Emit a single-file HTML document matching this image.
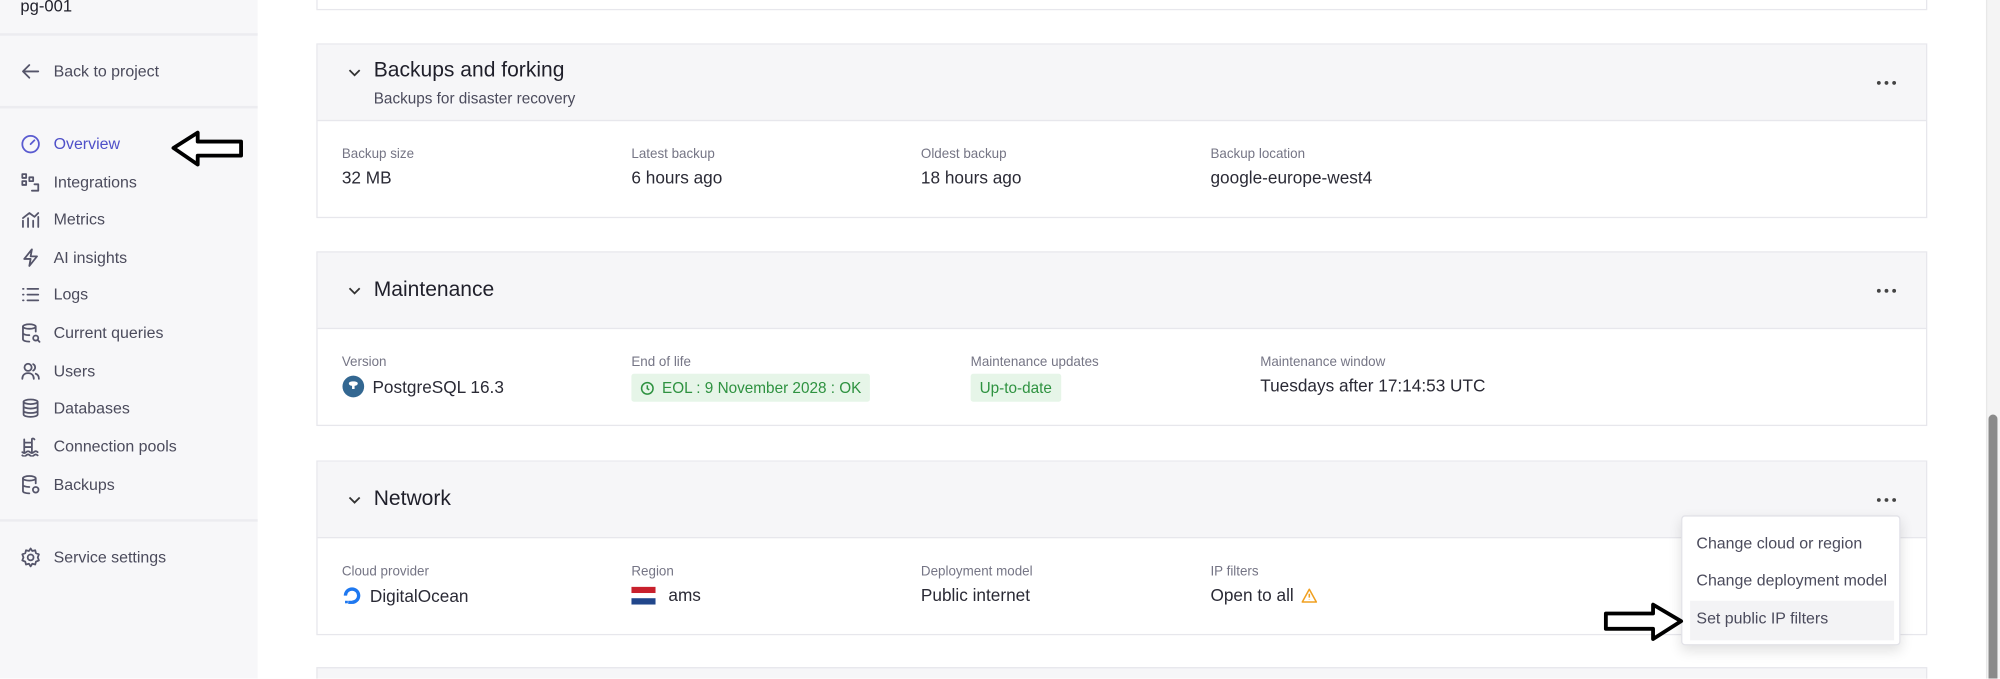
<!DOCTYPE html>
<html><head><meta charset="utf-8"><style>
*{box-sizing:border-box;margin:0;padding:0}
html,body{width:2000px;height:679px;overflow:hidden;background:#fff}
#w{position:absolute;left:0;top:0;width:1568px;height:532px;overflow:hidden;transform:scale(1.27551);transform-origin:0 0;font-family:"Liberation Sans",sans-serif;color:#1f1f2a}
.abs{position:absolute;white-space:nowrap}
#side{position:absolute;left:0;top:0;width:202px;height:532px;background:#f7f7f9}
.hr{position:absolute;left:0;width:202px;height:2px;background:#ececf0}
.nav{position:absolute;left:16px;font-size:12.5px;color:#4b4b5c;display:flex;align-items:center;gap:10px;height:16px}
.nav svg{width:16px;height:16px;fill:none;stroke:#55556a;stroke-width:1.4;stroke-linecap:round;stroke-linejoin:round}
.card{position:absolute;left:248px;width:1263px;border:1px solid #e7e7ec;background:#fff}
.hd{position:absolute;left:0;right:0;top:0;height:60px;background:#f6f6f8;border-bottom:1px solid #e7e7ec}
.ttl{position:absolute;left:44px;font-size:16.5px;color:#1f1f2a}
.chev{position:absolute;left:24px;width:10px;height:10px}
.dots{position:absolute;left:1222px;width:16px;height:4px}
.lb{position:absolute;font-size:10.5px;color:#757585}
.vl{position:absolute;font-size:13.5px;color:#2a2a35;display:flex;align-items:center;gap:6px}
.badge{background:#e6f5e8;color:#2e9240;font-size:12px;padding:4px 7px;border-radius:2px;display:flex;align-items:center;gap:6px}
</style></head><body><div id="w">
<div id="side">
<div class="abs" style="left:16px;top:-3px;font-size:13px;color:#1f1f2a">pg-001</div>
<div class="hr" style="top:26px"></div>
<div class="nav" style="top:48px"><svg viewBox="0 0 16 16"><path d="M14 8H2M7 3L2 8l5 5"/></svg>Back to project</div>
<div class="hr" style="top:83px"></div>
<div class="nav" style="top:105px;color:#4f50c8"><svg viewBox="0 0 16 16" style="stroke:#5a5bd0"><circle cx="8" cy="8" r="6.5"/><path d="M8 8l3-3"/></svg>Overview</div>
<div class="nav" style="top:135px"><svg viewBox="0 0 16 16"><rect x="1.5" y="1.5" width="3" height="3"/><rect x="1.5" y="7" width="3" height="3"/><rect x="7" y="4" width="3" height="3"/><path d="M9 14.5h5V9.5M14 9.5h-3"/></svg>Integrations</div>
<div class="nav" style="top:164px"><svg viewBox="0 0 16 16"><path d="M2 14V9M6 14V7M10 14V9M14 14V6M2 7l5-4 4 3 3-3"/></svg>Metrics</div>
<div class="nav" style="top:194px"><svg viewBox="0 0 16 16"><path d="M9 1.5L3 9h5l-1 5.5L13 7H8z"/></svg>AI insights</div>
<div class="nav" style="top:223px"><svg viewBox="0 0 16 16"><path d="M5.5 3.5H14M5.5 8H14M5.5 12.5H14M2 3.5h.5M2 8h.5M2 12.5h.5"/></svg>Logs</div>
<div class="nav" style="top:253px"><svg viewBox="0 0 16 16"><ellipse cx="7" cy="3" rx="5" ry="1.8"/><path d="M2 3v10c0 1 2 1.8 5 1.8M12 3v4M2 8c0 1 2 1.8 5 1.8"/><circle cx="12" cy="12" r="2"/><path d="M13.5 13.5l1.5 1.5"/></svg>Current queries</div>
<div class="nav" style="top:283px"><svg viewBox="0 0 16 16"><circle cx="6" cy="5" r="2.8"/><path d="M1.5 14c0-3 2-4.5 4.5-4.5s4.5 1.5 4.5 4.5M10 2.5a2.8 2.8 0 010 5M12 10c1.5.5 2.5 2 2.5 4"/></svg>Users</div>
<div class="nav" style="top:312px"><svg viewBox="0 0 16 16"><ellipse cx="8" cy="3" rx="5.5" ry="1.8"/><path d="M2.5 3v10c0 1 2.5 1.8 5.5 1.8s5.5-.8 5.5-1.8V3M2.5 6.5c0 1 2.5 1.8 5.5 1.8s5.5-.8 5.5-1.8M2.5 10c0 1 2.5 1.8 5.5 1.8s5.5-.8 5.5-1.8"/></svg>Databases</div>
<div class="nav" style="top:342px"><svg viewBox="0 0 16 16"><path d="M3 12V2.5M9 12V2.5M9 2.5c0-1 1.5-1 2 0M3 5h6M3 8.5h6M1.5 12.5c1 1 2 1 3 0s2-1 3 0 2 1 3 0 2-1 3 0M1.5 15c1 1 2 1 3 0s2-1 3 0 2 1 3 0 2-1 3 0"/></svg>Connection pools</div>
<div class="nav" style="top:372px"><svg viewBox="0 0 16 16"><ellipse cx="7" cy="3" rx="5" ry="1.8"/><path d="M2 3v10c0 1 2 1.8 5 1.8M12 3v4M2 8c0 1 2 1.8 5 1.8"/><circle cx="12" cy="12" r="2.2"/></svg>Backups</div>
<div class="hr" style="top:407px"></div>
<div class="nav" style="top:429px"><svg viewBox="0 0 16 16"><circle cx="8" cy="8" r="2.3"/><path d="M8 1l1.3 2 2.3-.6.6 2.3 2.3.9-.9 2.4.9 2.4-2.3.9-.6 2.3-2.3-.6L8 15l-1.3-2-2.3.6-.6-2.3-2.3-.9.9-2.4-.9-2.4 2.3-.9.6-2.3 2.3.6z"/></svg>Service settings</div>
</div>
<svg class="abs" style="left:134px;top:101px" width="58" height="30" viewBox="0 0 58 30"><path d="M2 15L21 3v7h34v11H21v7z" fill="#fff" stroke="#000" stroke-width="3" stroke-linejoin="round"/></svg>

<div class="card" style="top:-10px;height:18px"></div>

<div class="card" style="top:34px;height:137px">
<div class="hd"></div>
<svg class="chev" style="top:17px" viewBox="0 0 10 10"><path d="M1 3l4 4 4-4" fill="none" stroke="#333" stroke-width="1.4"/></svg>
<div class="ttl" style="top:11px">Backups and forking</div>
<div class="abs" style="left:44px;top:35px;font-size:12px;color:#4b4b5c">Backups for disaster recovery</div>
<svg class="dots" style="top:28px" viewBox="0 0 16 4"><circle cx="2" cy="2" r="1.5" fill="#444"/><circle cx="8" cy="2" r="1.5" fill="#444"/><circle cx="14" cy="2" r="1.5" fill="#444"/></svg>
<div class="lb" style="left:19px;top:80px">Backup size</div><div class="vl" style="left:19px;top:97px">32 MB</div>
<div class="lb" style="left:246px;top:80px">Latest backup</div><div class="vl" style="left:246px;top:97px">6 hours ago</div>
<div class="lb" style="left:473px;top:80px">Oldest backup</div><div class="vl" style="left:473px;top:97px">18 hours ago</div>
<div class="lb" style="left:700px;top:80px">Backup location</div><div class="vl" style="left:700px;top:97px">google-europe-west4</div>
</div>

<div class="card" style="top:197px;height:137px">
<div class="hd"></div>
<svg class="chev" style="top:25px" viewBox="0 0 10 10"><path d="M1 3l4 4 4-4" fill="none" stroke="#333" stroke-width="1.4"/></svg>
<div class="ttl" style="top:20px">Maintenance</div>
<svg class="dots" style="top:28px" viewBox="0 0 16 4"><circle cx="2" cy="2" r="1.5" fill="#444"/><circle cx="8" cy="2" r="1.5" fill="#444"/><circle cx="14" cy="2" r="1.5" fill="#444"/></svg>
<div class="lb" style="left:19px;top:80px">Version</div>
<div class="vl" style="left:19px;top:96px"><svg width="18" height="18" viewBox="0 0 18 18"><circle cx="9" cy="9" r="8.5" fill="#336791"/><path d="M5.5 6.5c0-2 7-2 7 0 0 1.5-1.5 2-2.5 2v2.5h-2V8.5c-1 0-2.5-.5-2.5-2z" fill="#fff"/></svg>PostgreSQL 16.3</div>
<div class="lb" style="left:246px;top:80px">End of life</div>
<div class="vl" style="left:246px;top:95px"><span class="badge"><svg width="11" height="11" viewBox="0 0 11 11"><circle cx="5.5" cy="5.5" r="4.5" fill="none" stroke="#2e9240" stroke-width="1.2"/><path d="M5.5 3v2.7l1.5 1" fill="none" stroke="#2e9240" stroke-width="1.2"/></svg>EOL : 9 November 2028 : OK</span></div>
<div class="lb" style="left:512px;top:80px">Maintenance updates</div>
<div class="vl" style="left:512px;top:95px"><span class="badge">Up-to-date</span></div>
<div class="lb" style="left:739px;top:80px">Maintenance window</div><div class="vl" style="left:739px;top:97px">Tuesdays after 17:14:53 UTC</div>
</div>

<div class="card" style="top:361px;height:137px">
<div class="hd"></div>
<svg class="chev" style="top:25px" viewBox="0 0 10 10"><path d="M1 3l4 4 4-4" fill="none" stroke="#333" stroke-width="1.4"/></svg>
<div class="ttl" style="top:20px">Network</div>
<svg class="dots" style="top:28px" viewBox="0 0 16 4"><circle cx="2" cy="2" r="1.5" fill="#444"/><circle cx="8" cy="2" r="1.5" fill="#444"/><circle cx="14" cy="2" r="1.5" fill="#444"/></svg>
<div class="lb" style="left:19px;top:80px">Cloud provider</div>
<div class="vl" style="left:19px;top:97px"><svg width="16" height="16" viewBox="0 0 16 16"><path d="M8 14.5A6.5 6.5 0 108 1.5 6.5 6.5 0 001.5 8h2.6A3.9 3.9 0 118 11.9z" fill="#1e78f0"/><rect x="5" y="12" width="3" height="2.5" fill="#1e78f0"/><rect x="2.5" y="12" width="2.2" height="2" fill="#1e78f0"/></svg>DigitalOcean</div>
<div class="lb" style="left:246px;top:80px">Region</div>
<div class="vl" style="left:246px;top:97px"><svg width="19" height="14" viewBox="0 0 19 14" style="margin-right:4px"><rect width="19" height="5" fill="#c8202c"/><rect y="5" width="19" height="4" fill="#fff"/><rect y="9" width="19" height="5" fill="#21468b"/></svg>ams</div>
<div class="lb" style="left:473px;top:80px">Deployment model</div><div class="vl" style="left:473px;top:97px">Public internet</div>
<div class="lb" style="left:700px;top:80px">IP filters</div>
<div class="vl" style="left:700px;top:97px">Open to all <svg width="13" height="12" viewBox="0 0 13 12"><path d="M6.5 1L12 11H1z" fill="none" stroke="#f0a020" stroke-width="1.2" stroke-linejoin="round"/><path d="M6.5 4.5v3M6.5 9v.3" stroke="#f0a020" stroke-width="1.2"/></svg></div>
</div>

<div class="card" style="top:523px;height:20px;background:#f6f6f8"></div>

<div class="abs" style="left:1318px;top:404px;width:172px;height:102px;background:#fff;border:1px solid #e2e2e8;border-radius:3px;box-shadow:0 4px 10px rgba(0,0,0,.12)">
<div class="abs" style="left:11px;top:14px;font-size:12.5px;color:#4b4b5c">Change cloud or region</div>
<div class="abs" style="left:11px;top:43px;font-size:12.5px;color:#4b4b5c">Change deployment model</div>
<div class="abs" style="left:6px;top:66px;width:160px;height:31px;background:#f3f3f5"></div>
<div class="abs" style="left:11px;top:73px;font-size:12.5px;color:#4b4b5c">Set public IP filters</div>
</div>
<svg class="abs" style="left:1256px;top:472px" width="64" height="32" viewBox="0 0 64 32"><path d="M62 15L40 2v7H3v12h37v8z" fill="#fff" stroke="#000" stroke-width="3" stroke-linejoin="round"/></svg>

<div class="abs" style="left:1557px;top:0;width:11px;height:532px;background:#f4f4f4;border-left:1px solid #e8e8e8"></div>
<div class="abs" style="left:1559px;top:325px;width:7px;height:207px;background:#8a8a8a;border-radius:4px 4px 0 0"></div>
</div></body></html>
